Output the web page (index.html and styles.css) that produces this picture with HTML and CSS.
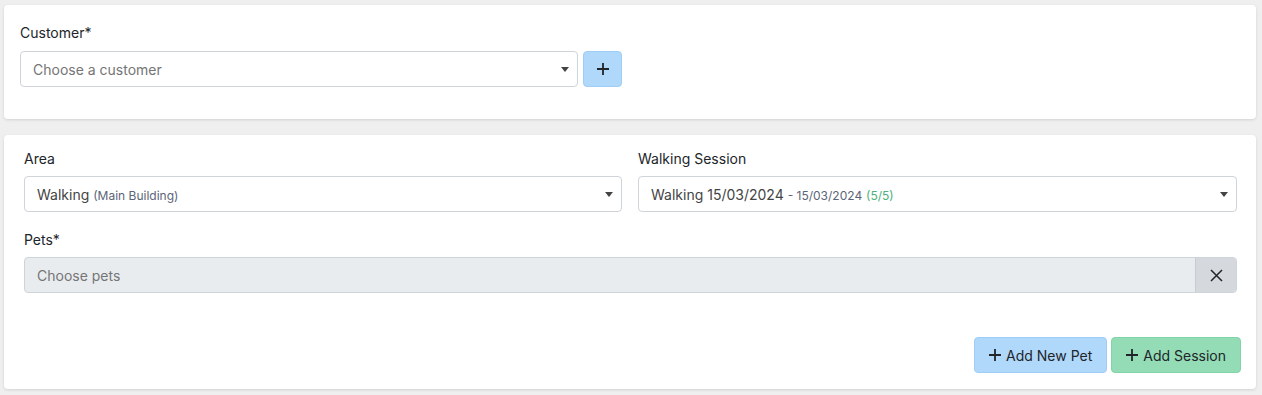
FILE: index.html
```html
<!DOCTYPE html>
<html lang="en">
<head>
  <meta charset="UTF-8" />
  <title>Book Session</title>
  <meta name="viewport" content="width=device-width, initial-scale=1" />
  <link rel="stylesheet" href="styles.css">
</head>
<body>

  <div class="card card-customer">
    <label class="form-label">Customer*</label>
    <div class="input-row">
      <div class="select-box">
        <span class="placeholder">Choose a customer</span>
        <span class="arrow"></span>
      </div>
      <button class="btn btn-blue btn-icon">
        <svg width="14" height="14" viewBox="0 0 14 14"><path d="M7 1v12M1 7h12" stroke="#212529" stroke-width="1.8" /></svg>
      </button>
    </div>
  </div>

  <div class="card card-session">
    <div class="grid-two">
      <div class="form-group">
        <label class="form-label">Area</label>
        <div class="select-box">
          <span class="value">Walking <small class="muted">(Main Building)</small></span>
          <span class="arrow"></span>
        </div>
      </div>
      <div class="form-group">
        <label class="form-label">Walking Session</label>
        <div class="select-box">
          <span class="value">Walking 15/03/2024 <small class="muted">- 15/03/2024</small> <small class="ok">(5/5)</small></span>
          <span class="arrow"></span>
        </div>
      </div>
    </div>

    <div class="form-group">
      <label class="form-label">Pets*</label>
      <div class="multi-box">
        <span class="placeholder">Choose pets</span>
        <span class="clear">
          <svg width="13" height="13" viewBox="0 0 13 13"><path d="M1 1l11 11M12 1L1 12" stroke="#212529" stroke-width="1.5" /></svg>
        </span>
      </div>
    </div>

    <div class="card-footer">
      <button class="btn btn-blue">
        <svg width="12" height="12" viewBox="0 0 12 12"><path d="M6 0v12M0 6h12" stroke="#212529" stroke-width="1.8" /></svg>
        Add New Pet
      </button>
      <button class="btn btn-green">
        <svg width="12" height="12" viewBox="0 0 12 12"><path d="M6 0v12M0 6h12" stroke="#212529" stroke-width="1.8" /></svg>
        Add Session
      </button>
    </div>
  </div>

</body>
</html>
```

FILE: styles.css
```css
body {
  margin: 0;
  padding: 5px 6px 6px 4px;
  background: #efefef;
  font-family: Inter, 'Noto Sans', sans-serif;
  font-size: 14px;
  color: #212529;
  box-sizing: border-box;
}

.card {
  background: #fff;
  border-radius: 4px;
  box-shadow: 0 1px 3px rgba(0, 0, 0, 0.12);
}

.card-customer {
  padding: 17px 16px 32px 16px;
  margin-bottom: 16px;
}

.card-session {
  padding: 13px 15px 16px 20px;
}

.form-label {
  display: block;
  line-height: 21px;
  margin-bottom: 7px;
}

.card-customer .form-label {
  margin-bottom: 8px;
}

.input-row {
  display: flex;
  gap: 5px;
}

.card-customer .select-box {
  width: 558px;
}

.select-box,
.multi-box {
  position: relative;
  height: 36px;
  box-sizing: border-box;
  border: 1px solid #ced4da;
  border-radius: 4px;
  display: flex;
  align-items: center;
  padding-left: 12px;
}

.placeholder {
  color: #757575;
}

.value {
  color: #444;
}

.muted {
  font-size: 12px;
  color: #6c757d;
}

.card-session .select-box .muted:first-child {
  color: #5b6478;
}

.ok {
  font-size: 12px;
  color: #4cb27c;
}

.arrow {
  position: absolute;
  right: 8px;
  top: 15px;
  border-left: 4px solid transparent;
  border-right: 4px solid transparent;
  border-top: 5px solid #444;
}

.grid-two {
  display: grid;
  grid-template-columns: 598px 1fr;
  gap: 16px;
  margin-right: 4px;
}

.form-group {
  margin-bottom: 17px;
}

.card-session > .form-group {
  margin-right: 4px;
  margin-bottom: 44px;
}

.multi-box {
  background: #e9ecef;
  padding-right: 0;
  overflow: hidden;
}

.multi-box .placeholder {
  flex: 1;
}

.clear {
  width: 40px;
  height: 100%;
  background: #d5d9de;
  border-left: 1px solid #c8ccd1;
  display: flex;
  align-items: center;
  justify-content: center;
}

.card-footer {
  display: flex;
  justify-content: flex-end;
  gap: 4px;
}

.btn {
  height: 36px;
  box-sizing: border-box;
  border-radius: 4px;
  font-family: inherit;
  font-size: 14px;
  color: #212529;
  padding: 0 14px;
  display: inline-flex;
  align-items: center;
  gap: 5px;
  cursor: pointer;
}

.btn-icon {
  width: 39px;
  justify-content: center;
  padding: 0;
}

.btn-blue {
  background: #b0d8fb;
  border: 1px solid #9fcdf5;
}

.btn-green {
  background: #93dcb6;
  border: 1px solid #82d3a8;
}
```
